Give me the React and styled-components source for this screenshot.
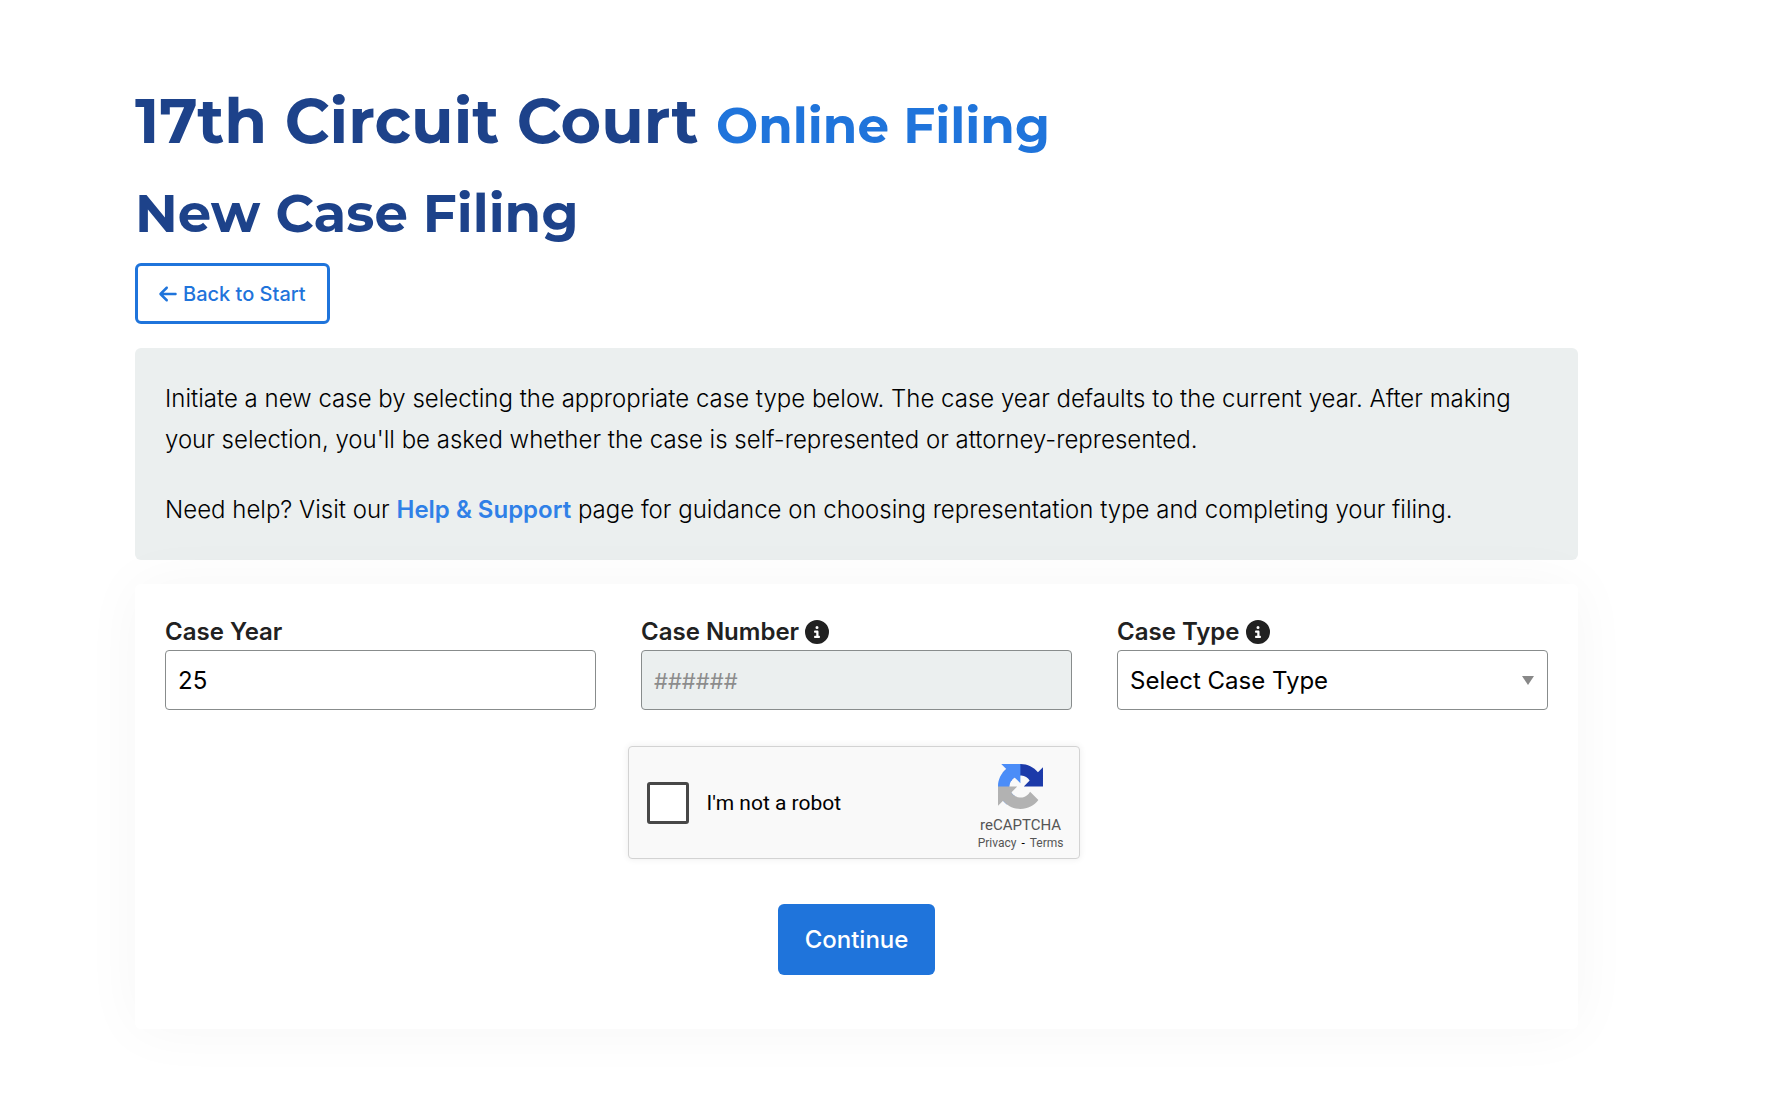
import React from "react";
import styled, { createGlobalStyle } from "styled-components";
import { FaArrowLeft, FaCircleInfo } from "react-icons/fa6";

const App = () => {
  return (
    <>
      <GlobalStyle />
      <Wrapper>
        <Title>
          17th Circuit Court <SubTitle>Online Filing</SubTitle>
        </Title>
        <Heading>New Case Filing</Heading>
        <BackButton type="button">
          <FaArrowLeft aria-hidden="true" />
          Back to Start
        </BackButton>
        <InfoBox>
          <InfoText>
            Initiate a new case by selecting the appropriate case type below.
            The case year defaults to the current year. After making your
            selection, you'll be asked whether the case is self-represented or
            attorney-represented.
          </InfoText>
          <InfoText>
            Need help? Visit our <HelpLink href="#">Help & Support</HelpLink>{" "}
            page for guidance on choosing representation type and completing
            your filing.
          </InfoText>
        </InfoBox>
        <FormCard onSubmit={(e) => e.preventDefault()}>
          <Fields>
            <Field>
              <Label htmlFor="caseYear">Case Year</Label>
              <Input id="caseYear" type="text" defaultValue="25" />
            </Field>
            <Field>
              <Label htmlFor="caseNumber">
                Case Number
                <FaCircleInfo aria-hidden="true" />
              </Label>
              <Input id="caseNumber" type="text" placeholder="######" disabled />
            </Field>
            <Field>
              <Label htmlFor="caseType">
                Case Type
                <FaCircleInfo aria-hidden="true" />
              </Label>
              <SelectWrapper>
                <Select id="caseType" defaultValue="">
                  <option value="">Select Case Type</option>
                </Select>
                <Caret viewBox="0 0 12 9" aria-hidden="true">
                  <path d="M0 0h12L6 9z" fill="#888" />
                </Caret>
              </SelectWrapper>
            </Field>
          </Fields>
          <Captcha>
            <CaptchaCheck id="robot" type="checkbox" />
            <CaptchaLabel htmlFor="robot">I'm not a robot</CaptchaLabel>
            <CaptchaBrand>
              <CaptchaLogo />
              <CaptchaName>reCAPTCHA</CaptchaName>
              <CaptchaLinks>
                <CaptchaLink href="#">Privacy</CaptchaLink>
                <span>-</span>
                <CaptchaLink href="#">Terms</CaptchaLink>
              </CaptchaLinks>
            </CaptchaBrand>
          </Captcha>
          <SubmitButton type="submit">Continue</SubmitButton>
        </FormCard>
      </Wrapper>
    </>
  );
};

const CaptchaLogo = () => (
  <Logo viewBox="0 0 64 64" aria-hidden="true">
    <path
      fill="#1c3aa9"
      d="M64 31.955l-.033-1.37V4.687l-7.16 7.16C50.948 4.674 42.033.093 32.05.093c-10.4 0-19.622 4.96-25.458 12.64l11.736 11.86a15.55 15.55 0 0 1 4.754-5.334c2.05-1.6 4.952-2.906 8.968-2.906.485 0 .86.057 1.135.163 4.976.393 9.288 3.14 11.828 7.124l-8.307 8.307L64 31.953"
    />
    <path
      fill="#4b8df8"
      d="M31.862.094l-1.37.033H4.594l7.16 7.16C4.58 13.147 0 22.06 0 32.046c0 10.4 4.96 19.622 12.64 25.458L24.5 45.768a15.55 15.55 0 0 1-5.334-4.754c-1.6-2.05-2.906-4.952-2.906-8.968 0-.485.057-.86.163-1.135.393-4.976 3.14-9.288 7.124-11.828l8.307 8.307L31.86.095"
    />
    <path
      fill="#b2b2b2"
      d="M.001 32.045l.033 1.37v25.898l7.16-7.16c5.86 7.173 14.774 11.754 24.76 11.754 10.4 0 19.622-4.96 25.458-12.64l-11.736-11.86a15.55 15.55 0 0 1-4.754 5.334c-2.05 1.6-4.952 2.906-8.968 2.906-.485 0-.86-.057-1.135-.163-4.976-.393-9.288-3.14-11.828-7.124l8.307-8.307c-10.522.04-22.4.066-27.295-.005"
    />
  </Logo>
);

const GlobalStyle = createGlobalStyle`
  * {
    box-sizing: border-box;
  }

  body {
    margin: 0;
    background-color: #fff;
    color: #000;
    font-family: "Inter", sans-serif;
    font-size: 24px;
  }
`;

const Wrapper = styled.main`
  padding: 84px 202px 76px 135px;
`;

const Title = styled.h1`
  margin: 0;
  font-family: "Montserrat", "Inter", sans-serif;
  font-size: 62px;
  font-weight: 700;
  line-height: 74px;
  color: #1d428a;
`;

const SubTitle = styled.span`
  font-size: 50px;
  color: #1f74db;
`;

const Heading = styled.h2`
  margin: 18px 0;
  font-family: "Montserrat", "Inter", sans-serif;
  font-size: 53px;
  font-weight: 700;
  line-height: 64px;
  color: #1d428a;
`;

const BackButton = styled.button`
  display: flex;
  align-items: center;
  gap: 6px;
  height: 61px;
  padding: 0 21px;
  border: 3px solid #1f74db;
  border-radius: 6px;
  background-color: #fff;
  color: #1f74db;
  font-family: inherit;
  font-size: 20px;
  font-weight: 500;

  svg {
    width: 18px;
    height: 20px;
  }
`;

const InfoBox = styled.section`
  margin: 24px 0;
  padding: 30px;
  border-radius: 6px;
  background-color: #ebefef;
`;

const InfoText = styled.p`
  margin: 0;
  font-weight: 300;
  line-height: 41px;

  & + & {
    margin-top: 29px;
  }
`;

const HelpLink = styled.a`
  color: #2f80e7;
  font-weight: 600;
  text-decoration: none;
`;

const FormCard = styled.form`
  display: flex;
  flex-direction: column;
  align-items: center;
  padding: 30px 30px 54px;
  border-radius: 6px;
  background-color: #fff;
  box-shadow: 0 0 60px rgba(0, 0, 0, 0.04);
`;

const Fields = styled.div`
  display: grid;
  grid-template-columns: repeat(3, 1fr);
  gap: 45px;
  width: 100%;
`;

const Field = styled.div`
  display: flex;
  flex-direction: column;
`;

const Label = styled.label`
  display: flex;
  align-items: center;
  gap: 6px;
  line-height: 36px;
  color: #212121;
  font-weight: 600;
`;

const Input = styled.input`
  width: 100%;
  height: 60px;
  padding: 0 12px;
  border: 1px solid #888c8c;
  border-radius: 4px;
  background-color: #fff;
  color: #000;
  font-family: inherit;
  font-size: 24px;

  &:disabled {
    background-color: #ebefef;
  }

  &::placeholder {
    color: #8c8c8c;
    font-size: 22px;
  }
`;

const SelectWrapper = styled.div`
  position: relative;
`;

const Select = styled(Input).attrs({ as: "select" })`
  display: block;
  appearance: none;
`;

const Caret = styled.svg`
  position: absolute;
  top: 26px;
  right: 14px;
  width: 12px;
  height: 9px;
  pointer-events: none;
`;

const Captcha = styled.div`
  display: flex;
  align-items: center;
  width: 452px;
  height: 113px;
  margin: 36px 6px 45px 0;
  padding: 0 15px 0 18px;
  border: 1px solid #d3d3d3;
  border-radius: 4px;
  background-color: #f9f9f9;
  box-shadow: 0 0 6px 1px rgba(0, 0, 0, 0.06);
  font-family: "Roboto", sans-serif;
`;

const CaptchaCheck = styled.input`
  width: 42px;
  height: 42px;
  margin: 0;
  border: 3px solid #484848;
  border-radius: 3px;
  background-color: #fff;
  appearance: none;
`;

const CaptchaLabel = styled.label`
  flex: 1;
  margin-left: 18px;
  font-size: 21px;
`;

const CaptchaBrand = styled.div`
  display: flex;
  flex-direction: column;
  align-items: center;
  align-self: flex-end;
  margin-bottom: 7px;
  color: #555;
`;

const Logo = styled.svg`
  width: 45px;
  height: 45px;
  margin-bottom: 6px;
`;

const CaptchaName = styled.span`
  font-size: 15px;
  line-height: 20px;
`;

const CaptchaLinks = styled.div`
  display: flex;
  gap: 5px;
  color: #000;
  font-size: 12px;
  line-height: 16px;
`;

const CaptchaLink = styled.a`
  color: #555;
  text-decoration: none;
`;

const SubmitButton = styled.button`
  height: 71px;
  padding: 0 27px;
  border: 0;
  border-radius: 6px;
  background-color: #1f74db;
  color: #fff;
  font-family: inherit;
  font-size: 24px;
  font-weight: 500;
`;

export default App;
